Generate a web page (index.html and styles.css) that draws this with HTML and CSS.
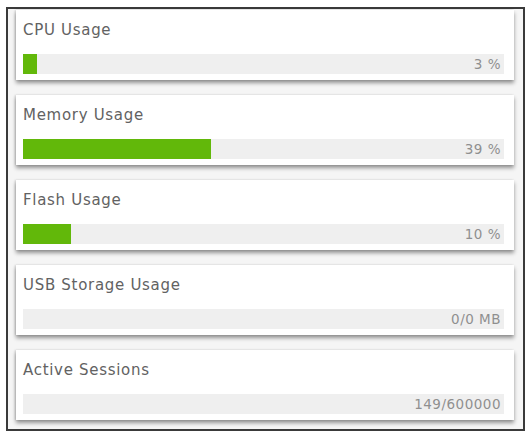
FILE: index.html
```html
<!DOCTYPE html>
<html lang="en">
<head>
  <meta charset="UTF-8" />
  <title>System Status</title>
  <link rel="stylesheet" href="styles.css">
</head>
<body>
  <div class="top-strip"></div>

  <div class="frame">
    <!-- CPU -->
    <div class="card">
      <div class="card-title">CPU Usage</div>
      <div class="bar">
        <div class="fill" style="width: 3%"></div>
        <span class="value">3 %</span>
      </div>
    </div>

    <!-- Memory -->
    <div class="card">
      <div class="card-title">Memory Usage</div>
      <div class="bar">
        <div class="fill" style="width: 39%"></div>
        <span class="value">39 %</span>
      </div>
    </div>

    <!-- Flash -->
    <div class="card">
      <div class="card-title">Flash Usage</div>
      <div class="bar">
        <div class="fill" style="width: 10%"></div>
        <span class="value">10 %</span>
      </div>
    </div>

    <!-- USB -->
    <div class="card">
      <div class="card-title">USB Storage Usage</div>
      <div class="bar">
        <span class="value">0/0 MB</span>
      </div>
    </div>

    <!-- Sessions -->
    <div class="card">
      <div class="card-title">Active Sessions</div>
      <div class="bar">
        <span class="value">149/600000</span>
      </div>
    </div>
  </div>
</body>
</html>
```

FILE: styles.css
```css
* {
  margin: 0;
  padding: 0;
  box-sizing: border-box;
}

body {
  font-family: "DejaVu Sans", sans-serif;
  background: #fff;
  color: #555;
}

.top-strip {
  height: 7px;
}

.frame {
  margin-left: 6px;
  width: 519px;
  height: 424px;
  border: 2px solid #3a3a3a;
  background: #f5f5f5;
  padding: 1px 9px 0 8px;
  display: flex;
  flex-direction: column;
  gap: 15px;
}

.card {
  background: #fff;
  height: 70px;
  padding: 10px 10px 6px 7px;
  box-shadow: 0 3px 4px rgba(0, 0, 0, 0.4), -1px 0 2px rgba(0, 0, 0, 0.15);
}

.card-title {
  font-size: 15px;
  line-height: 20px;
  height: 20px;
  color: #626262;
  letter-spacing: 0.7px;
}

.bar {
  margin-top: 14px;
  height: 20px;
  background: #efefef;
  position: relative;
  display: flex;
  align-items: center;
}

.fill {
  height: 100%;
  background: #62b80a;
}

.value {
  position: absolute;
  right: 3px;
  font-size: 13.5px;
  letter-spacing: 0.5px;
  color: #8f8f8f;
}
```
